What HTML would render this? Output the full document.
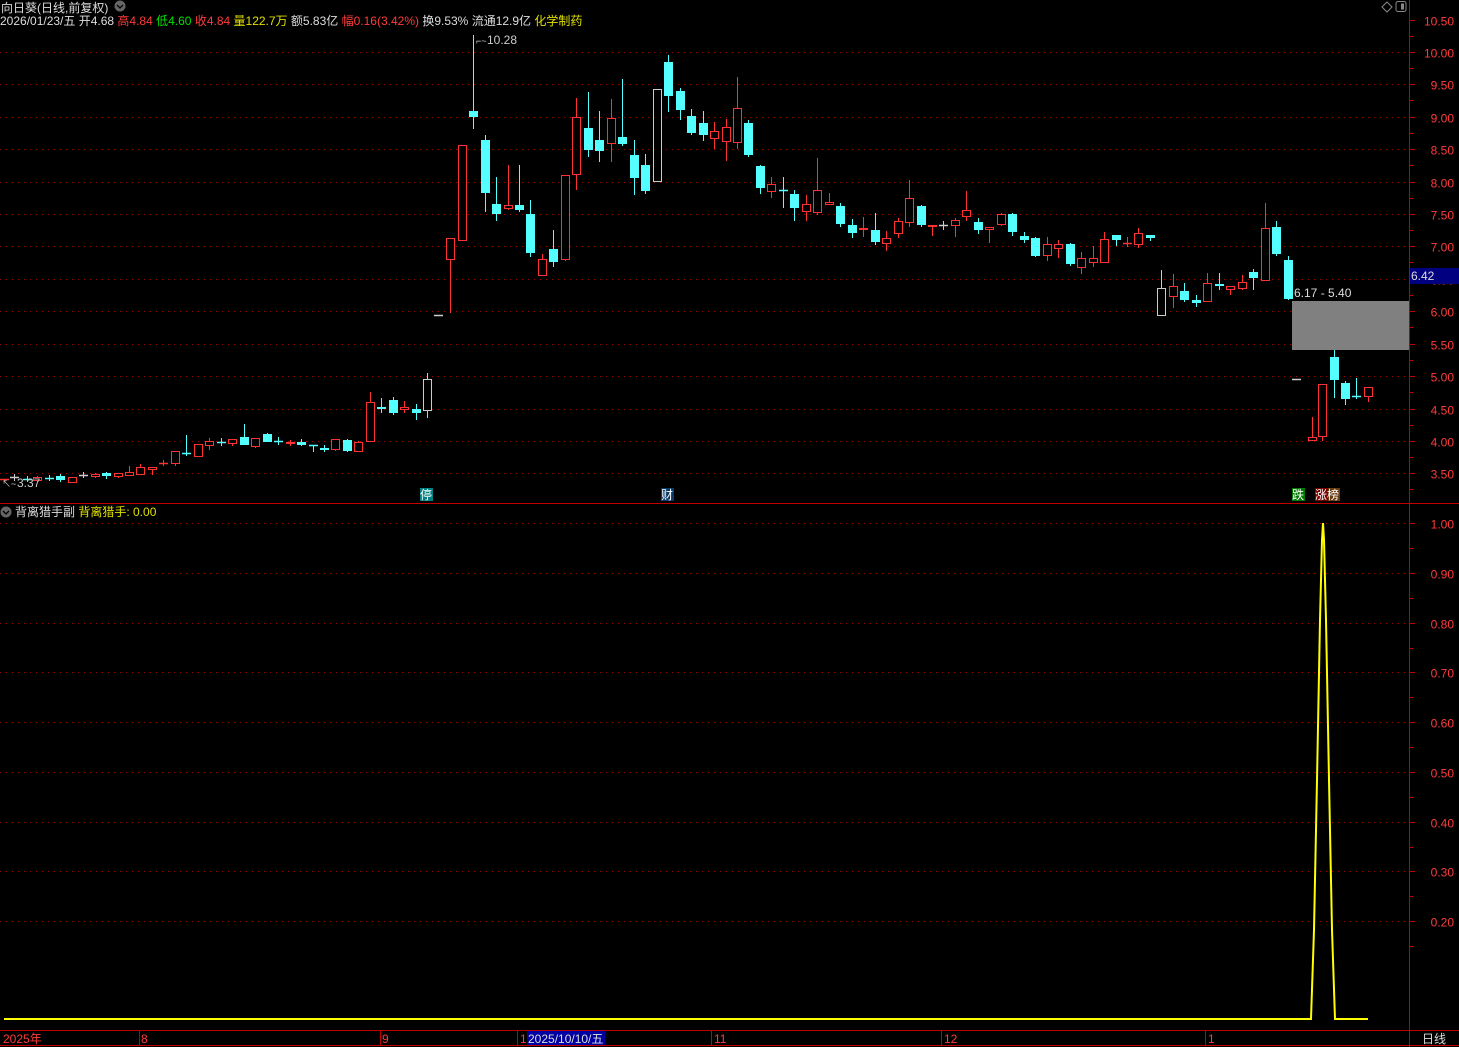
<!DOCTYPE html>
<html><head><meta charset="utf-8"><style>
html,body{margin:0;padding:0;background:#000;width:1459px;height:1047px;overflow:hidden}
body{font-family:"Liberation Sans","Noto Sans CJK SC",sans-serif}
svg{position:absolute;left:0;top:0}
</style></head><body>
<svg id="s" width="1459" height="1047" xmlns="http://www.w3.org/2000/svg" font-family="Liberation Sans, Noto Sans CJK SC, sans-serif" font-size="12">
<rect width="1459" height="1047" fill="#000"/>
<g id="grid" stroke="#a00000" stroke-dasharray="1 5" stroke-width="1"></g>
<!-- axes -->
<line x1="1409.5" y1="0" x2="1409.5" y2="1047" stroke="#c00000"/>
<line x1="0" y1="503.5" x2="1459" y2="503.5" stroke="#c00000"/>
<line x1="0" y1="1030.5" x2="1459" y2="1030.5" stroke="#c00000"/>
<line x1="0" y1="1045.5" x2="1459" y2="1045.5" stroke="#c00000"/>
<g id="ticks" stroke="#c00000"></g>
<g id="lab" fill="#ff3a3a" font-size="12"></g>
<!-- gray box -->
<rect x="1292" y="301" width="117" height="49" fill="#808080"/>
<text x="1294" y="297" fill="#ddd">6.17 - 5.40</text>
<rect x="1410" y="268" width="49" height="16" fill="#000080"/>
<text x="1411" y="280" fill="#ddd">6.42</text>
<g id="c"></g>
<!-- high label -->
<line x1="473.5" y1="35" x2="473.5" y2="40" stroke="#ccc"/>
<text x="476" y="44" fill="#ccc" font-size="9">⌐~</text>
<text x="487" y="44" fill="#ccc">10.28</text>
<text x="2" y="487" fill="#ccc" font-size="9">↖~</text>
<text x="17" y="487" fill="#ccc">3.37</text>
<!-- markers -->
<rect x="420" y="488" width="13" height="13" fill="#008080"/><text x="420" y="499" fill="#fff" font-size="12">停</text>
<rect x="661" y="488" width="13" height="13" fill="#0a3a6a"/><text x="661" y="499" fill="#fff" font-size="12">财</text>
<rect x="1292" y="488" width="13" height="13" fill="#007a00"/><text x="1292" y="499" fill="#fff" font-size="12">跌</text>
<rect x="1315" y="488" width="13" height="13" fill="#7a0000"/><rect x="1328" y="488" width="12" height="13" fill="#6a3a10"/><text x="1315" y="499" fill="#fff" font-size="12">涨榜</text>
<!-- header -->
<text x="1" y="12" fill="#ddd">向日葵(日线,前复权)</text>
<circle cx="120" cy="6" r="5.5" fill="#666"/><path d="M117 5 L120 8 L123 5" stroke="#000" stroke-width="1.3" fill="none"/>
<text x="0" y="25" font-size="12"><tspan fill="#ddd">2026/01/23/五 开4.68 </tspan><tspan fill="#ff3a3a">高4.84 </tspan><tspan fill="#00e000">低4.60 </tspan><tspan fill="#ff3a3a">收4.84 </tspan><tspan fill="#e0e000">量122.7万 </tspan><tspan fill="#ddd">额5.83亿 </tspan><tspan fill="#ff3a3a">幅0.16(3.42%) </tspan><tspan fill="#ddd">换9.53% 流通12.9亿 </tspan><tspan fill="#e0e000">化学制药</tspan></text>
<path d="M1382 7 L1387 2 L1392 7 L1387 12 Z" stroke="#888" fill="none"/>
<rect x="1396" y="1.5" width="10" height="10" rx="2" stroke="#888" fill="none"/><rect x="1401" y="3.5" width="3" height="6" fill="#888"/>
<!-- sub header -->
<circle cx="6" cy="512" r="5.5" fill="#666"/><path d="M3 511 L6 514 L9 511" stroke="#000" stroke-width="1.3" fill="none"/>
<text x="15" y="516"><tspan fill="#ddd">背离猎手副 </tspan><tspan fill="#e0e000">背离猎手: 0.00</tspan></text>
<polyline points="4,1019 1311,1019 1314,930 1317,780 1320,620 1322,540 1323,523 1324,540 1326,620 1329,780 1332,930 1335,1019 1368,1019" stroke="#ffff00" stroke-width="2" fill="none"/>
<!-- date axis -->
<g fill="#ff3a3a" font-size="12">
<text x="3" y="1043">2025年</text><text x="141" y="1043">8</text><text x="382" y="1043">9</text><text x="520" y="1043">1</text>
<text x="714" y="1043">11</text><text x="944" y="1043">12</text><text x="1208" y="1043">1</text>
</g>
<g stroke="#c00000"><line x1="139.5" y1="1030" x2="139.5" y2="1046"/><line x1="380.5" y1="1030" x2="380.5" y2="1046"/><line x1="517.5" y1="1030" x2="517.5" y2="1046"/><line x1="711.5" y1="1030" x2="711.5" y2="1046"/><line x1="941.5" y1="1030" x2="941.5" y2="1046"/><line x1="1205.5" y1="1030" x2="1205.5" y2="1046"/></g>
<rect x="527" y="1031" width="78" height="14" fill="#0000a0"/>
<text x="528" y="1043" fill="#ddd">2025/10/10/五</text>
<text x="1422" y="1043" fill="#ddd">日线</text>
</svg>
<script>
var NS="http://www.w3.org/2000/svg";
function el(p,t,a){var e=document.createElementNS(NS,t);for(var k in a)e.setAttribute(k,a[k]);p.appendChild(e);return e;}
var grid=document.getElementById('grid'),lab=document.getElementById('lab'),tk=document.getElementById('ticks');
var pl=["10.50","10.00","9.50","9.00","8.50","8.00","7.50","7.00","6.50","6.00","5.50","5.00","4.50","4.00","3.50"];
pl.forEach(function(s){var p=parseFloat(s);var y=Math.round(52+(10-p)*64.83)+0.5;
 if(p<10.5)el(grid,'line',{x1:0,x2:1409,y1:y,y2:y});
 el(tk,'line',{x1:1409,x2:1415,y1:y,y2:y});el(tk,'line',{x1:1409,x2:1413,y1:y+16,y2:y+16});
 var t=el(lab,'text',{x:1454,y:y+5,'text-anchor':'end'});t.textContent=s;});
["1.00","0.90","0.80","0.70","0.60","0.50","0.40","0.30","0.20"].forEach(function(s){var v=parseFloat(s);var y=Math.round(523+(1-v)*497.5)+0.5;
 el(grid,'line',{x1:0,x2:1409,y1:y,y2:y});el(tk,'line',{x1:1409,x2:1415,y1:y,y2:y});el(tk,'line',{x1:1409,x2:1413,y1:y+25,y2:y+25});
 var t=el(lab,'text',{x:1454,y:y+5,'text-anchor':'end'});t.textContent=s;});
// x, hi, top, bot, lo, type
var D=[[4,479,479,480,480,'r'],[14,474,477,477,481,'w'],[27,476,479,479,482,'c'],[37,476,477,481,482,'r'],[49,475,478,478,481,'c'],[60,474,476,480,482,'c'],[72,477,477,483,483,'r'],[83,472,475,475,478,'w'],[95,473,474,477,478,'r'],[106,472,473,476,479,'c'],[118,473,473,477,478,'r'],[129,466,472,476,476,'r'],[140,464,467,475,475,'r'],[152,467,467,470,475,'r'],[163,460,463,463,466,'r'],[175,451,451,464,466,'r'],[186,435,453,453,456,'c'],[198,444,444,457,457,'r'],[209,438,441,446,450,'r'],[221,438,442,442,446,'c'],[232,439,439,444,446,'r'],[244,424,437,445,445,'c'],[255,438,438,447,448,'r'],[267,433,434,442,442,'c'],[278,437,441,441,445,'c'],[290,440,442,444,446,'r'],[301,439,442,445,446,'c'],[313,445,445,446,452,'c'],[324,445,448,450,452,'c'],[335,439,439,450,451,'r'],[347,439,440,451,452,'c'],[358,441,442,452,452,'r'],[370,392,402,442,442,'r'],[381,398,407,409,413,'c'],[393,397,400,413,415,'c'],[404,401,407,410,413,'r'],[416,404,409,413,420,'c'],[427,373,379,411,418,'w'],[438,315,315,316,316,'w'],
[450,238,238,260,313,'r'],[462,145,145,241,241,'r'],[473,35,111,117,129,'c'],[485,135,140,193,212,'c'],[496,177,204,214,221,'c'],[508,165,205,209,210,'r'],[519,165,205,210,212,'c'],[530,200,214,253,257,'c'],[542,254,259,276,276,'r'],[553,230,249,262,267,'c'],[565,175,175,260,261,'r'],[576,98,117,175,190,'r'],[588,92,128,150,157,'c'],[599,111,140,151,162,'c'],[611,99,118,144,162,'r'],[622,79,137,144,146,'c'],[634,140,155,178,195,'c'],[645,154,165,191,194,'c'],[657,89,89,182,182,'w'],[668,55,62,96,112,'c'],[680,88,91,110,120,'c'],[691,109,116,133,135,'c'],[703,111,123,135,141,'c'],[714,122,131,139,149,'r'],[726,119,127,142,161,'r'],[737,77,108,143,149,'r'],[748,120,123,155,157,'c'],
[760,165,166,188,194,'c'],[771,177,184,192,198,'r'],[783,177,190,190,208,'c'],[794,190,194,208,221,'c'],[806,195,204,212,221,'r'],[817,158,190,213,215,'r'],[829,193,202,205,205,'r'],[840,203,206,224,227,'c'],[852,219,225,233,238,'c'],[863,217,228,230,237,'r'],[875,213,230,242,245,'c'],[886,231,238,244,251,'r'],[898,218,221,234,238,'r'],[909,180,198,223,227,'r'],[921,205,206,225,227,'c'],[932,225,225,227,236,'r'],[943,221,225,225,230,'w'],[955,218,220,226,237,'r'],[966,191,210,217,221,'r'],[978,218,222,230,234,'c'],[989,227,227,230,243,'r'],[1001,213,214,225,226,'r'],[1012,213,214,232,236,'c'],[1024,232,236,240,243,'c'],[1035,237,238,256,257,'c'],[1047,237,244,256,261,'r'],[1058,240,244,249,258,'r'],[1070,243,244,264,266,'c'],[1081,252,258,268,274,'r'],[1093,246,258,263,267,'r'],[1104,232,239,263,263,'r'],[1116,235,235,240,246,'c'],[1127,237,243,243,247,'r'],[1138,228,233,245,248,'r'],[1150,235,235,238,241,'c'],
[1161,270,288,316,316,'w'],[1173,274,286,297,308,'r'],[1184,283,291,300,302,'c'],[1196,295,300,303,307,'c'],[1207,273,283,302,302,'r'],[1219,273,284,286,290,'c'],[1230,286,286,290,295,'r'],[1242,275,282,289,290,'r'],[1253,269,272,278,290,'c'],[1265,203,228,281,281,'r'],[1276,221,227,254,256,'c'],[1288,256,260,299,300,'c'],
[1296,379,379,380,380,'w'],[1312,417,437,441,441,'r'],[1322,384,384,437,441,'r'],[1334,350,357,380,398,'c'],[1345,381,383,399,405,'c'],[1356,378,396,396,399,'c'],[1368,387,387,397,402,'r']];
var g=document.getElementById('c');
var col={r:'#ff3232',c:'#54ffff',w:'#cccccc'};
D.forEach(function(d){var x=d[0],c=col[d[5]];
 el(g,'line',{x1:x+.5,x2:x+.5,y1:d[1],y2:d[4],stroke:c});
 var h=d[3]-d[2];
 if(h<2){el(g,'line',{x1:x-4,x2:x+5,y1:d[2]+.5,y2:d[2]+.5,stroke:c,'stroke-width':1.5});}
 else if(d[5]=='c'){el(g,'rect',{x:x-4,y:d[2],width:9,height:h,fill:c});}
 else{el(g,'rect',{x:x-3.5,y:d[2]+.5,width:8,height:h-1,fill:'#000',stroke:c});}
});
</script>
</body></html>
